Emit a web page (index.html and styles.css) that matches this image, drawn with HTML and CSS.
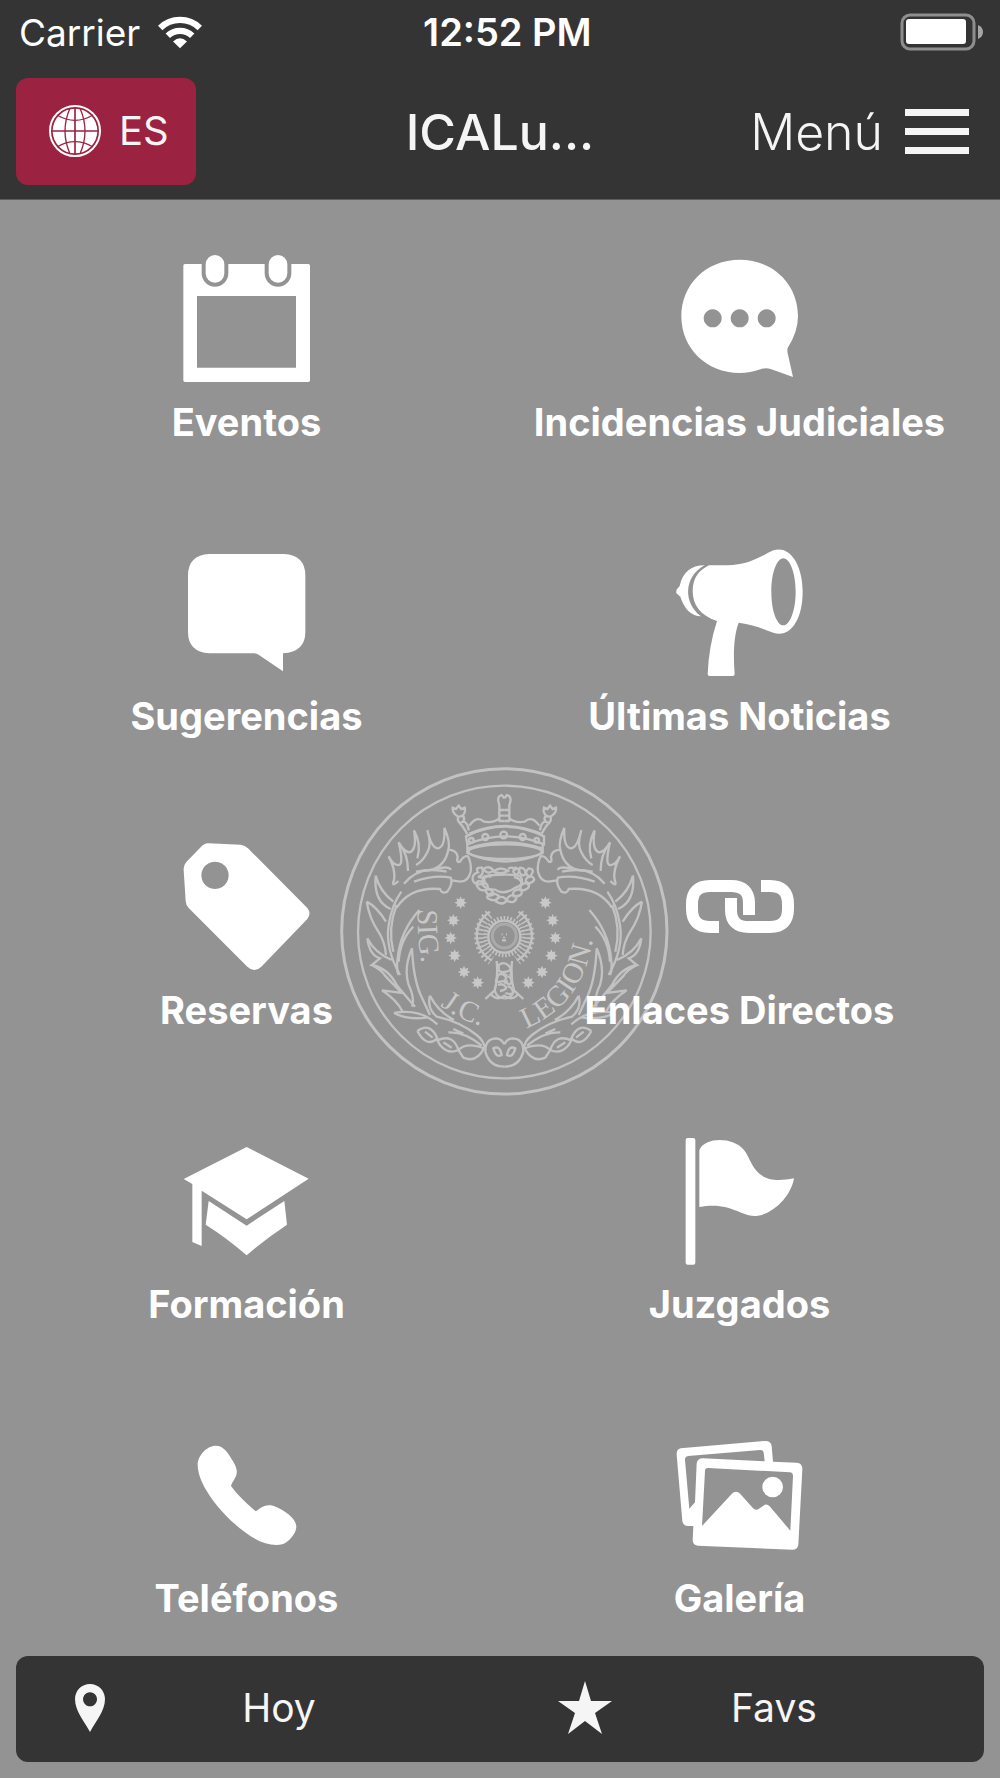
FILE: index.html
```html
<!DOCTYPE html>
<html lang="es">
<head>
<meta charset="utf-8">
<meta name="viewport" content="width=device-width, initial-scale=1">
<title>ICALugo</title>
<link rel="stylesheet" href="styles.css">
</head>
<body>
<header class="top">
  <div class="status">
    <div class="status-left">
      <span>Carrier</span>
      <svg class="wifi" viewBox="0 0 132 100" aria-hidden="true"><g fill="none" stroke="#fff" stroke-width="19"><path d="M6 36a86 86 0 0 1 120 0"/><path d="M29 60a53 53 0 0 1 74 0"/></g><path fill="#fff" d="M66 98 45 77q21-19 42 0z"/></svg>
    </div>
    <span class="time">12:52 PM</span>
    <svg class="battery" viewBox="0 0 84 38" aria-hidden="true"><rect x="2" y="2" width="72" height="34" rx="8" fill="none" stroke="#8e8e8e" stroke-width="3"/><rect x="6" y="6" width="60" height="25" rx="3" fill="#fff"/><path fill="#a5a5a5" d="M78 12q5 2 5 7t-5 7z"/></svg>
  </div>
  <nav class="nav">
    <button class="lang" type="button">
      <svg class="globe" viewBox="148 312 156 156" aria-hidden="true"><circle cx="226" cy="390" r="75" fill="none" stroke="#fff" stroke-width="6"/><circle cx="226" cy="390" r="67" fill="#fff"/><g fill="none" stroke="#9c2241" stroke-width="5"><path d="M226 320v140M156 390h140"/><path stroke-width="4" d="M210 324q-28 66 0 132M242 324q28 66 0 132"/><path stroke-width="4" d="M172 342q54 32 108 0M172 438q54-32 108 0"/></g></svg>
      <span>ES</span>
    </button>
    <h1 class="title">ICALu...</h1>
    <button class="menu" type="button">
      <span>Menú</span>
      <svg class="bars" viewBox="0 0 64 46" aria-hidden="true"><path fill="#f5f5f5" d="M0 0h64v7H0zM0 19h64v7H0zM0 38h64v7H0z"/></svg>
    </button>
  </nav>
</header>

<main class="home">
  <svg class="seal" viewBox="0 0 1050 1050" aria-hidden="true">
    <defs>
      <path id="arc-sig" d="M264 462Q258 560 285 670"/>
      <path id="arc-jc" d="M330 752Q400 805 500 824"/>
      <path id="arc-legion" d="M588 820Q790 740 796 470"/>
      <g id="branch">
        <path d="M343 218Q362 262 355 284Q345 335 300 345Q360 330 362 345M343 218Q346 275 325 280Q305 282 292 226Q306 268 292 292Q278 320 258 330M252 226Q275 268 262 310M252 226Q262 285 238 292Q222 290 206 262Q222 330 206 330Q190 332 176 304M206 262Q235 300 234 348M176 304Q198 345 192 375Q183 400 205 378M222 386Q258 345 300 345M355 284Q380 285 383 305Q378 325 390 320Q402 300 414 304Q425 325 422 350Q415 380 390 380L365 376"/>
        <path d="M252 380Q315 358 362 368Q370 385 352 410Q335 418 330 402Q240 395 200 458M258 350Q310 340 350 350M214 410Q185 450 176 510Q165 580 210 660M137 362Q150 410 190 440M137 362Q130 440 182 462M110 440Q140 455 168 500M110 440Q118 490 145 530Q165 560 168 600M112 550Q135 595 185 615M112 550Q118 600 150 610L125 630Q175 640 200 690Q220 715 255 755M200 450Q172 520 190 590M125 630Q155 645 165 662L215 714L156 706Q200 735 218 770"/>
        <path d="M268 465Q210 530 203 610Q198 645 206 660M250 515Q210 555 206 620M246 580Q220 640 236 690Q255 730 246 755M246 580Q250 670 272 720L300 780M192 774Q270 760 322 808M192 774Q230 795 290 788M300 722Q290 760 320 785Q390 800 440 840Q465 860 465 885M300 722Q325 770 372 795M355 832Q405 830 455 872M322 856Q370 835 385 885Q355 900 330 870zM262 828Q300 800 322 850Q290 880 262 828M385 885Q410 860 462 880Q440 925 400 908zM285 830L308 848M340 862L365 878M370 822L400 836"/>
        <path d="M418 212Q440 180 462 200Q490 205 508 190M508 200V150Q498 125 515 120L523 130M508 165H523M508 182H523M508 198H523"/>
        <path d="M412 238Q400 215 390 205Q380 195 385 186Q365 172 368 158L378 162 386 152 394 162 404 158Q408 172 398 182Q406 190 400 198Q414 204 416 226M385 186L398 182M390 205L402 198"/>
        <path d="M480 470A84 84 0 0 0 486 616M500 618Q505 670 494 706L466 732M494 706Q500 730 523 730M466 890Q465 850 500 850Q515 852 523 868M466 890Q478 935 523 935M490 880Q510 870 515 900Q498 910 490 880z"/>
        <path class="rays" d="M478 478A88 88 0 0 0 484 616"/>
      </g>
      <path id="spark" d="M0-19 4-10 13-13 10-4 19 0 10 4 13 13 4 10 0 19-4 10-13 13-10 4-19 0-10-4-13-13-4-10z"/>
      <g id="sparks">
        <use href="#spark" x="392" y="443"/><use href="#spark" x="370" y="496"/><use href="#spark" x="362" y="549"/><use href="#spark" x="374" y="602"/><use href="#spark" x="402" y="651"/><use href="#spark" x="443" y="683"/>
      </g>
    </defs>
    <g class="seal-lines">
      <circle cx="523" cy="529" r="488" stroke-width="9"/>
      <circle cx="523" cy="531" r="439"/>
      <use href="#branch"/>
      <use href="#branch" transform="matrix(-1 0 0 1 1046 0)"/>
      <ellipse cx="525" cy="290" rx="110" ry="22"/>
      <path d="M408 244Q525 186 642 244V268Q525 220 412 268zM418 236Q525 190 632 236M412 268V294Q525 345 638 294V268M415 280Q525 245 635 280"/>
      <circle cx="521" cy="240" r="10"/><circle cx="466" cy="246" r="9"/><circle cx="578" cy="246" r="9"/><circle cx="424" cy="256" r="7"/><circle cx="620" cy="256" r="7"/>
      <path d="M430 380q-8-22 14-28q-10-16 12-14q8 22-12 28q22 0 20 20q-24 6-34-6M444 398q-14-24 14-18q22 8 12 24q-16 6-26-6M466 404q20-6 26 14q-18 12-26-14M470 428q10-22 36-6q-6 24-36 6M496 438q20-24 34-2q-12 18-34 2M528 436q14-24 32-10q-4 24-32 10M548 424q0-24 26-20q8 22-26 20M572 408q-6-22 20-26q16 18-20 26M590 388q-10-20 14-24q22 12-14 24M598 366q-18-12-2-26q24 2 2 26M584 362q-22-4-14-24q22 2 14 24M560 360q-18-8-4-22q20 6 4 22M460 342q18-12 30 4q-14 16-30-4M490 350q20-18 44-2q-20 12-44 2M534 342q14-10 24 4M458 366q16-6 26 0M552 366q20 4 24 20"/>
      <path d="M455 385Q460 360 490 360Q550 356 572 364Q585 390 556 398Q520 422 495 404Q465 405 455 385z"/>
      <circle cx="523" cy="545" r="48"/>
      <circle cx="523" cy="545" r="56" stroke-width="12" stroke-dasharray="5 5"/>
      <circle cx="523" cy="543" r="36" stroke-width="9" opacity=".5"/>
      <path d="M515 538h3M528 538h3M522 545v5M516 556h12"/>
      <path d="M506 630q16-12 30 2t-6 18-24-4zM538 640q10 8 2 22M504 660q14-8 22 4t-14 16-10-12zM532 664q14 2 12 16t-18 2M504 690q14-6 22 4t-16 14M532 694q12 0 16 14t-22 6M512 652l20 10M522 684l12-6"/>
      <path d="M480 715Q500 740 523 722Q548 740 566 715"/>
    </g>
    <g class="seal-fill">
      <use href="#sparks"/>
      <use href="#sparks" transform="matrix(-1 0 0 1 1038 0)"/>
      <text class="seal-text"><textPath href="#arc-sig">SIG.</textPath></text>
      <text class="seal-text"><textPath href="#arc-jc">J.C.</textPath></text>
      <text class="seal-text"><textPath href="#arc-legion">LEGION.</textPath></text>
    </g>
  </svg>

  <div class="tiles">
    <a class="tile" href="#eventos">
      <svg class="icon" viewBox="190 75 378 378" aria-hidden="true"><path fill-rule="evenodd" d="M193 102H243V130A40 40 0 0 0 323 130V102H432V130A40 40 0 0 0 512 130V102H563Q568 102 568 107V451Q568 456 563 456H193Q188 456 188 451V107Q188 102 193 102zM229 198V413H526V198z"/><rect x="255" y="75" width="56" height="83" rx="28"/><rect x="444" y="75" width="56" height="83" rx="28"/></svg>
      <span>Eventos</span>
    </a>
    <a class="tile" href="#incidencias">
      <svg class="icon" viewBox="471 75 378 378" aria-hidden="true"><path fill-rule="evenodd" d="M659 89C760 89 834 163 834 258Q834 305 803 354Q801 361 803 370L819 441 752 417Q738 412 724 417C700 425 680 429 659 429C558 429 484 354 484 259S558 89 659 89zM578 238a27 27 0 1 0 .1 0zM659 238a27 27 0 1 0 .1 0zM740 238a27 27 0 1 0 .1 0z"/></svg>
      <span>Incidencias Judiciales</span>
    </a>
    <a class="tile" href="#sugerencias">
      <svg class="icon" viewBox="190 57 378 378" aria-hidden="true"><path d="M266 72H490Q554 76 554 136V306Q554 366 487 370V424L416 376Q408 370 400 370H266Q202 366 202 306V136Q202 76 266 72z"/></svg>
      <span>Sugerencias</span>
    </a>
    <a class="tile" href="#noticias">
      <svg class="icon" viewBox="351 57 378 378" aria-hidden="true"><path fill-rule="evenodd" d="M447 106H500C570 106 610 74 640 61C690 44 728 105 728 185C728 270 690 325 640 308C610 298 580 283 536 278C520 320 520 380 524 432Q524 438 518 438H449Q443 438 443 432Q446 350 471 273C420 255 398 225 398 182Q398 130 447 106zM670 85C650 85 634 130 634 185S650 286 670 286 707 240 707 185 690 85 670 85z"/><path d="M434 106C370 140 370 220 423 259Q380 258 361 200L349 190V180L359 168Q372 106 434 106z"/></svg>
      <span>Últimas Noticias</span>
    </a>
    <a class="tile" href="#reservas">
      <svg class="icon" viewBox="130 69 378 378" aria-hidden="true"><path fill-rule="evenodd" d="M202 70 300 74Q313 76 322 85L500 264Q513 280 500 297L362 440Q341 460 320 440L144 264Q136 256 135 244L129 150Q128 136 137 126L180 82Q189 71 202 70zM223 125a41 41 0 1 0 .1 0z"/></svg>
      <span>Reservas</span>
    </a>
    <a class="tile" href="#enlaces">
      <svg class="icon" viewBox="0 0 126 126" aria-hidden="true"><g fill="none" stroke="#fff" stroke-width="12"><path d="M42 84H33Q15 84 15 66V61Q15 43 33 43H54Q72 43 72 60V72"/><path d="M84 43H93Q111 43 111 61V66Q111 84 93 84H72Q54 84 54 67V55"/></g></svg>
      <span>Enlaces Directos</span>
    </a>
    <a class="tile" href="#formacion">
      <svg class="icon" viewBox="130 51 378 378" aria-hidden="true"><path d="M318 81 504 176 318 298 183 212V378L155 366V192L129 177zM204 243 318 317 431 243 439 314Q370 360 318 406Q260 355 195 314z"/></svg>
      <span>Formación</span>
    </a>
    <a class="tile" href="#juzgados">
      <svg class="icon" viewBox="111 51 378 378" aria-hidden="true"><rect x="137" y="54" width="29" height="380" rx="6"/><path d="M178 90C195 50 280 50 312 90C340 125 340 200 462 175C455 225 400 287 343 288C300 288 270 245 178 261z"/></svg>
      <span>Juzgados</span>
    </a>
    <a class="tile" href="#telefonos">
      <svg class="icon" viewBox="550 3 378 378" aria-hidden="true"><path d="M645 47C668 47 680 65 698 95C722 135 698 145 691 168C710 195 740 222 765 244C780 237 790 218 825 230C850 240 887 265 887 290C887 310 865 335 845 343C800 352 750 325 700 280C650 235 590 160 591 103C592 75 620 47 645 47z"/></svg>
      <span>Teléfonos</span>
    </a>
    <a class="tile" href="#galeria">
      <svg class="icon" viewBox="111 33 378 378" aria-hidden="true"><path fill-rule="evenodd" d="M122 85 376 63Q393 63 395 78L399 125 470 128Q488 130 487 148L475 374Q473 389 457 389L173 377Q158 375 158 360L160 318H143Q129 317 127 303L110 104Q109 88 122 85zM144 108Q134 110 135 120L148 266 165 247 170 130Q173 115 188 115L374 124 371 98Q370 89 360 90zM204 144Q195 144 195 153L186 318 275 222Q288 208 301 222L338 263Q347 273 357 266L370 257Q380 249 389 259L451 332 459 168Q459 158 449 157z"/><circle cx="398" cy="201" r="31"/></svg>
      <span>Galería</span>
    </a>
  </div>
</main>

<footer class="dock">
  <a class="dock-item" href="#hoy">
    <svg class="pin" viewBox="0 0 90 144" aria-hidden="true"><path fill-rule="evenodd" d="M45 0C70 0 90 20 90 45C90 82 62 112 45 144C28 112 0 82 0 45C0 20 20 0 45 0zM45 25a21 21 0 1 0 .1 0z"/></svg>
    <span>Hoy</span>
  </a>
  <a class="dock-item" href="#favs">
    <svg class="star" viewBox="0 0 54 54" aria-hidden="true"><path d="M27 0 33 20H54L37 32 44 53 27 40 10 53 17 32 0 20H21z"/></svg>
    <span>Favs</span>
  </a>
</footer>
</body>
</html>
```
FILE: styles.css
```css
* {
  box-sizing: border-box;
}

body {
  margin: 0;
  background: #939393;
  color: #fff;
  font-family: Inter, "Liberation Sans", sans-serif;
}

a {
  color: inherit;
  text-decoration: none;
}

button {
  border: 0;
  color: inherit;
  font: inherit;
  cursor: pointer;
}

svg {
  display: block;
  flex: none;
}

.top {
  background: #343434;
  border-bottom: 1px solid #5c5c5c;
}

.status {
  display: grid;
  grid-template-columns: 1.03fr auto 1fr;
  align-items: center;
  height: 64px;
  padding: 0 16px 0 19px;
  font-size: 37px;
}

.status-left {
  display: flex;
  align-items: center;
  gap: 18px;
}

.time {
  font-size: 38px;
  font-weight: 600;
}

.wifi {
  width: 44px;
  height: 33px;
}

.battery {
  width: 84px;
  height: 38px;
  justify-self: end;
}

.nav {
  display: grid;
  grid-template-columns: 1fr auto 1fr;
  align-items: center;
  padding: 14px 16px;
  color: #f5f5f5;
}

.lang {
  display: flex;
  align-items: center;
  justify-self: start;
  gap: 18px;
  width: 180px;
  height: 107px;
  padding: 0 0 2px 33px;
  border-radius: 12px;
  background: #9c2241;
  font-size: 40px;
}

.globe {
  width: 52px;
  height: 52px;
}

.title {
  margin: 0;
  font-size: 50px;
  font-weight: 500;
}

.menu {
  display: flex;
  align-items: center;
  justify-self: end;
  gap: 22px;
  padding: 0 15px 0 0;
  background: none;
  font-size: 50px;
  font-weight: 300;
}

.bars {
  width: 64px;
  height: 46px;
}

.home {
  position: relative;
  padding: 55px 14px 0 0;
}

.seal {
  position: absolute;
  top: 555px;
  left: calc(50% - 170px);
  width: 350px;
  height: 350px;
}

.seal-lines {
  fill: none;
  stroke: #c2c2c2;
  stroke-width: 7px;
}

.rays {
  stroke-width: 30px;
  stroke-dasharray: 5 8;
}

.seal-fill {
  fill: #c8c8c8;
}

.seal-text {
  font-family: "Liberation Serif", serif;
  font-size: 88px;
}

.tiles {
  position: relative;
  display: grid;
  grid-template-columns: 1fr 1fr;
  row-gap: 105px;
}

.tile {
  display: flex;
  flex-direction: column;
  align-items: center;
  gap: 19px;
  font-size: 38px;
  font-weight: 700;
  line-height: 44px;
}

.icon {
  width: 126px;
  height: 126px;
  overflow: visible;
  fill: #fff;
}

.dock {
  display: grid;
  grid-template-columns: 1fr 1fr;
  column-gap: 22px;
  height: 106px;
  margin: 36px 16px 16px;
  border-radius: 12px;
  background: #343434;
  color: #f5f5f5;
  font-size: 39px;
}

.dock-item {
  display: grid;
  grid-template-columns: 147px 1fr;
  align-items: center;
  justify-items: center;
  padding: 0 94px 3px 0;
}

.dock-item svg {
  fill: #f5f5f5;
}

.pin {
  width: 30px;
  height: 48px;
}

.star {
  width: 54px;
  height: 54px;
}
```
